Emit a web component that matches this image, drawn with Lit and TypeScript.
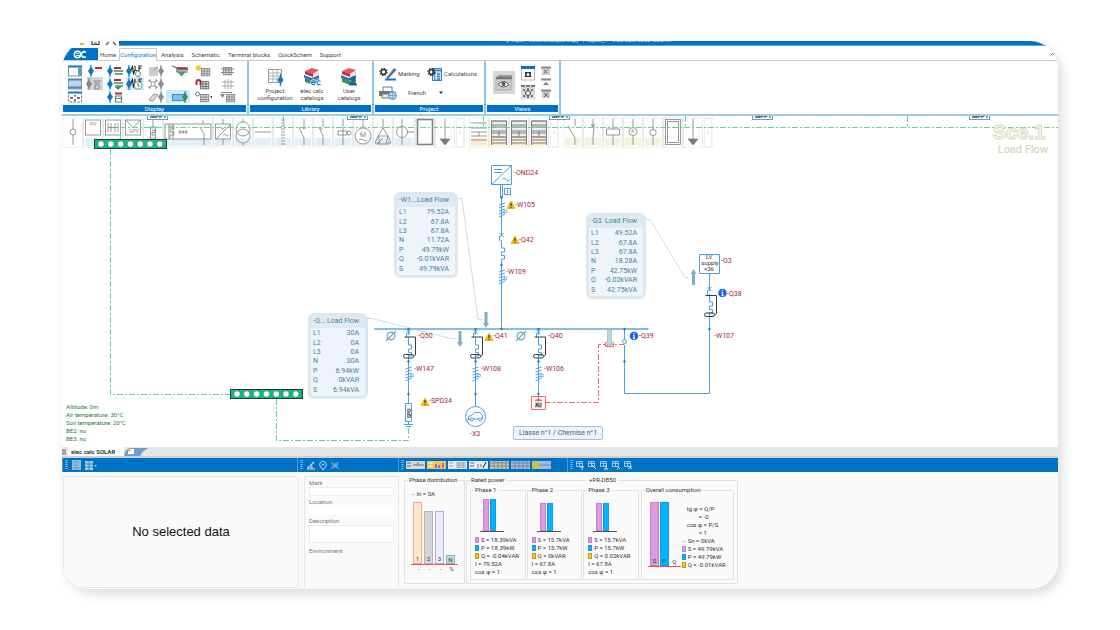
import { LitElement, html, svg, css } from "lit";
import { customElement, property } from "lit/decorators.js";

const BLUE = "#0f78c8";

const icon = (w: number, h: number, body: unknown) =>
  html`<svg width=${w} height=${h} viewBox="0 0 ${w} ${h}" fill="none" aria-hidden="true">${body}</svg>`;

/* ---------- ribbon glyphs ---------- */
const plug = (x: number, y: number, c = BLUE) =>
  svg`<path d="M${x} ${y - 6}V${y + 6}" stroke=${c} stroke-width="1.2"/><path d="M${x - 3} ${y}L${x} ${y - 4.5}L${x + 3} ${y}L${x} ${y + 4.5}Z" fill=${c}/>`;
const lines = (x: number, y: number, c1 = "#a8283c", c2 = "#3c8a55") =>
  svg`<path d="M${x} ${y - 3}h7" stroke=${c1} stroke-width="2"/><path d="M${x} ${y}h9M${x + 1} ${y + 3}h8" stroke=${c2} stroke-width="1.6"/>`;
const gridGlyph = (x: number, y: number, c = "#8e8e8e") =>
  svg`<rect x=${x} y=${y} width="9" height="8" fill="#ddd"/><path d="M${x} ${y + 0.5}h9M${x} ${y + 3}h9M${x} ${y + 5.5}h9M${x} ${y + 7.8}h9M${x + 0.5} ${y}v8M${x + 3} ${y}v8M${x + 6} ${y}v8M${x + 8.7} ${y}v8" stroke=${c} stroke-width="1"/>`;
const drop = (x: number, y: number) => svg`<path d="M${x} ${y}h4l-2 2.5z" fill="#333"/>`;
const wave = (x: number, c: string) =>
  svg`<path d="M${x} 5l1.5-3.5 1 8 1-4M${x + 4} 1v4.500h2.500M${x + 8} 6V1h3M${x + 8} 3.3h2.500" stroke=${c} stroke-width="1.1"/>`;

const displayIcons: { label: string; on?: string; body: unknown }[] = [
  { label: "Right panel", body: svg`<rect x="3.5" y="1.500" width="13" height="9.500" fill="#fff" stroke="#888"/><path d="M3 1.500h14" stroke=${BLUE} stroke-width="2"/><path d="M14.500 3v7.500" stroke="#5d9fb0" stroke-width="3"/>` },
  { label: "Marks", body: svg`${plug(6, 6)}<path d="M10 3h7" stroke="#c0283c" stroke-width="2"/>` },
  { label: "Marks and text", body: svg`${plug(5, 6)}${lines(9, 6)}` },
  { label: "Load flow values", body: svg`${plug(4, 6)}${wave(6, "#222")}<circle cx="13" cy="9" r="2.6" fill="#fff" stroke="#6a9a7c"/>` },
  { label: "Documents", body: svg`<rect x="4" y="2" width="9" height="9" fill="#ccc"/><path d="M9 5l4-3" stroke="#888"/>${plug(16, 6, "#8e8e8e")}` },
  { label: "Feeder", body: svg`<path d="M4 1l5 2v4h12V4h3" stroke="#666" stroke-width="1.2"/><path d="M9 2.500h13v3H9z" fill="#7c7474"/><path d="M9 3h10" stroke="#b2283c" stroke-width="1.500"/><path d="M9 6.500h9l-4.500 5z" fill="#4b9a68"/>` },
  { label: "New table", body: svg`${gridGlyph(9, 3)}<circle cx="6.500" cy="3" r="2.800" fill="#f3c92f"/>` },
  { label: "Grid", body: svg`${gridGlyph(7, 2)}<path d="M5 4h13M5 7.500h13" stroke="#888"/>${drop(20, 5)}` },
  { label: "Split panel", body: svg`<rect x="3.500" y="1.500" width="13" height="9.500" fill="#b9d6ea" stroke="#7a9cb5"/><path d="M3 1.500h14M3 9.500h14" stroke="#4b86b0" stroke-width="2"/>` },
  { label: "Hidden marks", on: "grey", body: svg`${plug(4, 6, "#888")}<path d="M8 3h8M9 5h6M10 7v4h4V7z" stroke="#888" stroke-width="1.200"/>` },
  { label: "Marks and supply", body: svg`${plug(5, 6)}${lines(9, 5)}<path d="M10 9h6l-3 3z" fill="#3c8a55"/>` },
  { label: "Load flow clock", on: "blue", body: svg`${plug(4, 6)}${wave(6, "#222")}<circle cx="13" cy="7.500" r="3.800" fill="#fff" stroke="#6a9a7c"/><path d="M13 5v3h2" stroke="#444" stroke-width=".8"/>` },
  { label: "Collapse", body: svg`<path d="M4 2l8 8M12 2L4 10M4 4V2h2M10 2h2v2M12 8v2h-2M6 10H4V8" stroke="#8e8e8e"/><rect x="6" y="4" width="4" height="4" fill="#fff" stroke="#999"/>${plug(16, 6, "#8e8e8e")}` },
  { label: "", body: "" },
  { label: "Snap", body: svg`${gridGlyph(8, 3, "#777")}<path d="M4.500 7V4a2 2 0 0 1 4 0v3" stroke="#b2283c" stroke-width="2"/>` },
  { label: "Axes", body: svg`<path d="M6 4h12M6 8h12M9 2v9M12 1v10M15 2v9" stroke="#aaa"/>` },
  { label: "Full screen", body: svg`<rect x="3.500" y="1.500" width="13" height="9.500" fill="#fff" stroke="#888" stroke-dasharray="3 1"/><path d="M3 1.500h14" stroke=${BLUE} stroke-width="2"/><path d="M5 7h3M12 7h3M10 4v1.500M10 8v2" stroke="#444" stroke-width="1.500"/>` },
  { label: "", body: "" },
  { label: "Table marks", body: svg`${plug(5, 6)}<path d="M10 2.500h7" stroke="#b2283c" stroke-width="2"/><path d="M10.500 5h6v6h-6zM11 7.500h5" stroke="#5b8a6c" stroke-width="1.200"/>` },
  { label: "", body: "" },
  { label: "Cable", body: svg`<path d="M4 9l5-6 4 1-5 6z" stroke="#8e8e8e" fill="#ddd"/>${plug(16, 6, "#8e8e8e")}` },
  { label: "Supply", on: "blue", body: svg`<rect x="4.500" y="3.500" width="12" height="6" fill="#7fc0f4" stroke="#3a92db"/>${plug(17, 6, "#3c8a55")}` },
  { label: "Table options", body: svg`${gridGlyph(8, 3)}<circle cx="5.500" cy="3" r="2" stroke="#777"/>${drop(18, 5)}` },
  { label: "Import table", body: svg`${gridGlyph(10, 3)}<path d="M5 1.500h11" stroke="#888"/><path d="M4 3h5l-2.500 4z" fill="#888"/>` },
];

const books = (extra: unknown) =>
  svg`<path d="M2 10l8 3 6-3v4l-6 3-8-3z" fill="#3c8f63"/><path d="M1 7l8 3 7-3v3l-7 3-8-3z" fill="#3478b8"/><path d="M2 3l7-3 7 2-6 4z" fill="#e05a62"/><path d="M2 3l8 3v3L2 6z" fill="#b82f3e"/><path d="M10 6l6-3v3l-6 3z" fill="#f3dcdc"/>${extra}`;

const libraryItems = [
  { l: ["Project", "configuration"], i: svg`<path d="M2.500 1.500h13v13h-13z" fill="#fff" stroke="#8c9a94"/><path d="M2.500 5h13M2.500 8h13M2.500 11h13M7 1.500v13M11 1.500v13" stroke="#a4b5ac"/>${plug(14.5, 12)}` },
  { l: ["elec calc", "catalogs"], i: books(svg`<path d="M8.500 14.500h4a2 2 0 1 0-.6 1.600M17.500 13.500a2 2 0 1 0 0 2.600" stroke="#fff" stroke-width="2.600"/><path d="M8.500 14.500h4a2 2 0 1 0-.6 1.600M17.500 13.500a2 2 0 1 0 0 2.600" stroke=${BLUE} stroke-width="1.100"/>`) },
  { l: ["User", "catalogs"], i: books(svg`<circle cx="13" cy="11" r="2.400" fill="#1f5f9a"/><path d="M9 17.500c0-5 8-5 8 0z" fill="#1f5f9a"/>`) },
];

const gear = (x: number, y: number) =>
  svg`<circle cx=${x} cy=${y} r="2.400" stroke="#333" stroke-width="1.500"/><circle cx=${x} cy=${y} r="3.600" stroke="#333" stroke-width="1.200" stroke-dasharray="1.500 1.300"/>`;

/* ---------- symbol palette ---------- */
type Sym = { n: string; w?: number; tint?: string; body: unknown };
const sky = "#dff0fb";
const symbols: Sym[] = [
  { n: "Node", body: svg`<path d="M9 1v10M9 17v10"/><circle cx="9" cy="14" r="3"/>` },
  { n: "PV module", tint: sky, body: svg`<rect x="1.500" y="2" width="15" height="15" fill="#fff"/><text class="t" x="6" y="8">PV</text>` },
  { n: "Junction", tint: sky, body: svg`<rect x="1.500" y="2" width="15" height="15" fill="#fff"/><path d="M4 5v9M7 5v9M11 5v9M14 5v9M4 9.500h10"/>` },
  { n: "GPV", tint: sky, body: svg`<rect x="1.500" y="2" width="15" height="15" fill="#fff"/><path d="M2 2l7 8 7-8"/><text class="t" x="5" y="15">GPV</text>` },
  { n: "Fuse", tint: sky, body: svg`<path d="M9 1v26"/><rect x="6.500" y="9" width="5" height="12" fill="#eee"/><path d="M8 12h2.500v2.500H8V17h2.500"/>` },
  { n: "Switchboard", w: 48, tint: sky, body: svg`<rect x="1" y="6" width="46" height="15" fill="#fff"/><path d="M5 6v15M9 6v15M5 8h5v3H6v3h4v3H6v3M14 14h10M16 12v4M19 12v4M22 12v4M39 2v4M36 9l4 7v11"/>` },
  { n: "Converter", tint: sky, body: svg`<rect x="1.500" y="6" width="15" height="15" fill="#fff"/><path d="M9 1v5M2 21l15-15M4 10q2-2 3 0t3 0M9 17q2-2 3 0t3 0M9 21v6"/>` },
  { n: "Transformer", tint: sky, body: svg`<path d="M9 1v3M9 25v3"/><circle cx="9" cy="11" r="7"/><circle cx="9" cy="18" r="7"/>` },
  { n: "Busbar", tint: sky, body: svg`<path d="M1 14h16"/>` },
  { n: "Cable", tint: sky, body: svg`<path d="M8 1v26M10 1v26" stroke-dasharray="2 1"/>` },
  { n: "Switch", tint: sky, body: svg`<path d="M10 1v10M10 20v7M10 20L5 9M8 10h4"/>` },
  { n: "Contactor", tint: sky, body: svg`<path d="M9 1v8M9 18v9M9 18L5 9l4 3"/>` },
  { n: "Relay", tint: sky, body: svg`<path d="M9 1v26M4 13h9v4H4z"/><circle cx="15" cy="15" r="2"/>` },
  { n: "Motor", tint: sky, body: svg`<path d="M9 1v8"/><circle cx="9" cy="18" r="8" fill="#fff"/><text class="m" x="6" y="19">M</text><path d="M5 22q2-2 4 0t4 0"/>` },
  { n: "Load", tint: sky, body: svg`<path d="M9 1v9M9 10l-5 8h10zM9 20l-5 5M3 26h12M4 18l-3 7h5zM14 18l3 7h-5z"/>` },
  { n: "Meter", w: 20, tint: sky, body: svg`<path d="M8 1v26M13 14h7"/><circle cx="8" cy="14" r="5.500"/>` },
  { n: "Enclosure", body: svg`<rect x="1.500" y="1.500" width="15" height="25" stroke-width="1.600"/>` },
  { n: "Outgoing", body: svg`<path d="M9 1v22"/><path d="M4 21h10l-5 6z" fill="#777"/>` },
];
const cabinet = svg`<rect x="1.500" y="3" width="15" height="16" fill="#eee"/><path d="M1.500 3h15M1.500 7h15M1.500 9h15M1.500 13h15M1.500 15h15M1.500 19h15M1.500 22h15M1.500 25h15M9 13v6M1.500 3v24M16.500 3v24" stroke-width="1"/>`;
const amber = "#fdeccb";
const boards: Sym[] = [
  { n: "Board A", tint: amber, body: svg`<path d="M1 5h16M1 10h16M1 14h16M1 18h16M1 22h16M9 14v4"/>` },
  { n: "Board B", tint: amber, body: cabinet },
  { n: "Board C", tint: amber, body: cabinet },
  { n: "Board D", tint: amber, body: cabinet },
];
const lime = "#eff6dc";
const controls: Sym[] = [
  { n: "Contact", tint: lime, body: svg`<path d="M11 1v7M4 8l7 12v7"/>` },
  { n: "Auxiliary", tint: lime, body: svg`<path d="M9 1v7M7 7h4l-2 2zM10 9L9 20v7"/>` },
  { n: "Coil", tint: lime, body: svg`<path d="M9 1v10M9 17v10M2.500 11h13v6h-13z"/>` },
  { n: "Ammeter", tint: lime, body: svg`<path d="M9 1v8M9 18v9"/><circle cx="9" cy="13.500" r="4"/><text class="t" x="7" y="15">A</text>` },
  { n: "Lamp", tint: lime, body: svg`<path d="M9 1v10M9 18v9"/><circle cx="9" cy="14.500" r="3.200"/>` },
  { n: "Enclosure", body: svg`<rect x="1.500" y="1.500" width="15" height="25"/><rect x="3.500" y="3.500" width="11" height="21"/>` },
  { n: "Outgoing", body: svg`<path d="M9 1v22"/><path d="M4 21h10l-5 6z" fill="#777"/>` },
];

/* ---------- single-line diagram parts ---------- */
const dot = (x: number, y: number) => svg`<circle cx=${x} cy=${y} r="1.200" fill="#1f7ac4" stroke="none"/>`;
const coil = (x: number, y: number) =>
  svg`<path d="M${x - 3} ${y + 2}l6-2M${x - 3} ${y + 5}l6-2M${x - 3} ${y + 8}l6-2M${x - 3} ${y + 11}l6-2M${x - 3} ${y + 14}l6-3" /><circle cx=${x + 3.5} cy=${y + 8.5} r="1.500" stroke-width=".9"/>`;
const breaker = (x: number, y: number) =>
  svg`<path d="M${x - 2} ${y + 1}l4 4M${x + 2} ${y + 1}l-4 4M${x - 2} ${y + 4}v5M${x} ${y + 8}v8M${x} ${y + 16}h3v4h-3v3.500h3v3.500h-3"/>`;
const residual = (x: number, y: number) =>
  svg`<g stroke="#3a3a3a"><path d="M${x - 4} ${y}h11v18l-2 1.500"/><rect x=${x - 5} y=${y + 17.5} width="10" height="3.500" rx="1.700"/></g>`;
const terminal = (x: number, y: number) =>
  svg`<rect x=${x + 0.5} y=${y + 0.5} width="72" height="9" fill="#07c07c" stroke="#2c3b34"/>${Array.from({ length: 7 }, (_, i) => svg`<circle cx=${x + 7 + i * 9.8} cy=${y + 5} r="3.200" fill="#fff" stroke="#365" stroke-width=".6"/>`)}`;
const warn = (x: number, y: number) =>
  svg`<path d="M${x} ${y - 4}l4 7.500h-8z" fill="#f9b517" stroke="#f9b517" stroke-linejoin="round"/><path d="M${x} ${y - 2}v3M${x} ${y + 2}v1" stroke="#333" stroke-width="1.200"/>`;
const info = (x: number, y: number) =>
  svg`<circle cx=${x} cy=${y} r="4.300" fill="#1765f0"/><path d="M${x} ${y - 3}v1.300M${x} ${y - 0.8}v3.500M${x - 1} ${y + 2.7}h2M${x - 1} ${y - 0.5}h1" stroke="#fff" stroke-width="1.200"/>`;
const arrow = (x: number, y: number, up = false) =>
  up
    ? svg`<path d="M${x} ${y}l3 5h-1.500v11h-3V${y + 5}h-1.500z" fill="#7eaec4"/>`
    : svg`<path d="M${x} ${y + 16}l3-5h-1.500V${y}h-3v11h-1.500z" fill="#7eaec4"/>`;
const phi = (x: number, y: number) =>
  svg`<circle cx=${x} cy=${y} r="3.800" stroke="#7eaec4" stroke-width="1.500"/><path d="M${x - 5} ${y + 5}l10-10" stroke="#7eaec4" stroke-width="1.400"/>`;

const labels: [string, number, number][] = [
  ["-OND24", 514, 175], ["-W105", 515, 207], ["-Q42", 519, 242], ["-W109", 506, 274],
  ["-G3", 721, 263], ["-Q38", 727, 296], ["-W107", 714, 338], ["-Q39", 639, 338],
  ["-Q50", 418, 338], ["-Q41", 493, 338], ["-Q40", 548, 338], ["-W147", 414, 371],
  ["-W108", 481, 371], ["-W106", 544, 371], ["-SPD34", 429, 403], ["-X3", 470, 436],
];

type Flow = { mark: string; x: number; y: number; w: number; v: string[] };
const flows: Flow[] = [
  { mark: "-W1...", x: 332, y: 76, w: 64, v: ["79.52A", "67.8A", "67.8A", "11.72A", "49.79kW", "-0.01kVAR", "49.79kVA"] },
  { mark: "-G3", x: 524, y: 97, w: 60, v: ["49.52A", "67.8A", "67.8A", "18.28A", "42.75kW", "-0.02kVAR", "42.75kVA"] },
  { mark: "-Q...", x: 246, y: 197, w: 60, v: ["30A", "0A", "0A", "30A", "6.94kW", "0kVAR", "6.94kVA"] },
];
const flowKeys = ["L1", "L2", "L3", "N", "P", "Q", "S"];

const shared = css`
  :host { display: block; }
  * { box-sizing: border-box; }
  svg { display: block; flex: none; }
  button { font: inherit; color: inherit; background: none; border: 0; padding: 0; margin: 0; white-space: nowrap; }
`;

@customElement("ribbon-bar")
class RibbonBar extends LitElement {
  static styles = [shared, css`
    :host { color: #444; font-size: 6px; line-height: 8px; }
    .title { height: 5px; display: flex; overflow: hidden; background: #fff; }
    .quick { width: 57px; padding-left: 16px; display: flex; gap: 4px; }
    .caption { flex: 1; background: #0072c6; color: #d9ebf8; text-align: center; line-height: 8px; border-bottom: 1px solid #5aa5dc; }
    .caption span { display: block; margin-top: -5px; }
    .tabs { display: flex; height: 15px; padding: 2px 3px 0 0; border-bottom: 1px solid #cacaca; }
    .app { width: 36px; background: #0072c6; color: #fff; display: flex; align-items: center; justify-content: center; }
    .tab { padding: 0 3px; margin-bottom: -1px; border: 1px solid transparent; border-bottom: 0; }
    .tab.home { padding: 0 2px 0 1px; }
    .tab.active { color: #0f78c8; border-color: #cacaca; background: #fff; padding: 0; }
    .fold { margin-left: auto; color: #0f78c8; align-self: flex-start; padding-top: 4px; }
    .groups { display: flex; height: 55px; border-bottom: 2px solid #9ccbee; }
    .group { display: flex; flex-direction: column; border-right: 2px solid #8dc2ea; padding-bottom: 2px; }
    .body { flex: 1; display: flex; }
    .name { background: #0072c6; color: #fff; text-align: center; height: 7px; line-height: 7px; margin: 0 1px; }
    .display { width: 187px; }
    .display .body { display: grid; grid-template-columns: repeat(5, 20px) 26px 22px 26px; grid-auto-rows: 13px; padding: 3px 0 0 3px; }
    .cell { display: flex; align-items: center; justify-content: center; }
    .cell.grey { background: #d4d4d4; margin: 0 2px; }
    .cell.blue { background: #d2e8f8; margin: 0 1px; }
    .library { width: 125px; }
    .library .body { gap: 1px; padding: 7px 0 0 8px; }
    .big { width: 36px; display: flex; flex-direction: column; align-items: center; line-height: 7px; }
    .big svg { margin-bottom: 1px; }
    .project { width: 112px; }
    .project .body { display: grid; grid-template-columns: 48px 1fr; grid-template-rows: 18px 18px; padding: 4px 0 0 5px; align-items: center; }
    .item { display: flex; align-items: center; gap: 1px; text-align: left; }
    .lang { display: flex; grid-column: 1 / 3; align-items: center; padding-top: 2px; }
    .lang select { appearance: none; border: 0; background: none; font: inherit; color: inherit; padding: 0; width: 30px; margin-left: 11px; }
    .views { width: 75px; }
    .views .body { padding: 5px 0 0 7px; gap: 6px; }
    .eye { background: #d6d6d6; width: 22px; height: 23px; margin-top: 5px; display: flex; align-items: center; justify-content: center; }
    .stack { display: flex; flex-direction: column; gap: 3px; }
  `];
  render() {
    return html`
      <div class="title">
        <div class="quick">
          ${icon(9, 5, svg`<path d="M2 3h4" stroke="#e8b53a" stroke-width="2"/>`)}
          ${icon(10, 5, svg`<path d="M1 0v3.500h7V0M3 2h3" stroke="#444" stroke-width="1.200"/>`)}
          ${icon(12, 5, svg`<path d="M1 4l3-3M8 1l3 3" stroke="#555" stroke-width="1.200"/>`)}
        </div>
        <div class="caption"><span>[Projet Photovoltaïque.ecp] - Project_1 - elec calc 2023 SOLAR</span></div>
      </div>
      <nav class="tabs">
        <button class="app" aria-label="elec calc">${icon(14, 9, svg`<circle cx="4.500" cy="4.500" r="3.900" fill="#fff"/><path d="M3 4.500h3.500a2 2 0 1 0-.8 1.600" stroke="#0072c6"/><path d="M13 2.500a2.700 2.700 0 1 0 0 4" stroke="#fff" stroke-width="1.500"/>`)}</button>
        <button class="tab home">Home</button><button class="tab active">Configuration</button>
        ${["Analysis", "Schematic", "Terminal blocks", "QuickSchem", "Support"].map((t) => html`<button class="tab">${t}</button>`)}
        <button class="fold" aria-label="Collapse ribbon">${icon(5, 4, svg`<path d="M.5 3.500l2-2 2 2" stroke=${BLUE}/>`)}</button>
      </nav>
      <div class="groups">
        <section class="group display">
          <div class="body">${displayIcons.map((d) => d.label
            ? html`<button class="cell ${d.on ?? ""}" aria-label=${d.label}>${icon(20, 12, d.body)}</button>`
            : html`<span></span>`)}</div>
          <div class="name">Display</div>
        </section>
        <section class="group library">
          <div class="body">${libraryItems.map((b) => html`<button class="big">${icon(18, 18, b.i)}<span>${b.l[0]}</span><span>${b.l[1]}</span></button>`)}</div>
          <div class="name">Library</div>
        </section>
        <section class="group project">
          <div class="body">
            <button class="item">${icon(18, 14, svg`${gear(4.5, 5)}<path d="M7 11l8-10 2.500 2L9 12z" fill="#5d6f9c"/><path d="M6 12.500h11" stroke=${BLUE} stroke-width="2"/>`)}<span>Marking</span></button>
            <button class="item">${icon(16, 14, svg`<path d="M5.500 1.500h9v12h-9z" fill="#cfe4f6" stroke="#2f7fc0"/><path d="M6 3.500h8M7 7h1.500M10 7h3M7 9.500h1.500M10 9.500h3M7 12h1.500M10 12h3" stroke="#2f7fc0" stroke-width="1.500"/>${gear(4.5, 5)}`)}<span>Calculations</span></button>
            <div class="lang">
              ${icon(18, 14, svg`<path d="M4 5V1h9v4" fill="#fff" stroke="#777"/><path d="M0 5h15v5H0z" fill="#6c7480"/><path d="M3 8h8v4H3z" fill="#e8e8e8" stroke="#777"/><circle cx="13.500" cy="9.500" r="4" fill="#e5f1fb" stroke="#4a90cc"/><path d="M9.500 9.500h8M13.500 5.500v8" stroke="#4a90cc" stroke-width=".7"/><ellipse cx="13.500" cy="9.500" rx="2" ry="4" stroke="#4a90cc" stroke-width=".7"/>`)}
              <select aria-label="Language"><option>French</option></select>
              ${icon(6, 4, svg`<path d="M1 .5h4l-2 2.500z" fill="#333"/>`)}
            </div>
          </div>
          <div class="name">Project</div>
        </section>
        <section class="group views">
          <div class="body">
            <button class="eye" aria-label="View">${icon(18, 17, svg`<path d="M2 3l2-2h13v3z" fill="#999"/><path d="M1 4h15v12H1z" fill="#cdcdcd" stroke="#aaa"/><path d="M1 4h16" stroke="#777" stroke-width="2.500"/><path d="M3 10.500q5.500-6 11 0q-5.500 5-11 0z" stroke="#555" fill="#eee"/><circle cx="8.500" cy="10" r="1.900" fill="#555"/>`)}</button>
            <div class="stack">
              <button aria-label="Save view">${icon(14, 15, svg`<path d="M.5 1h13v13H.5z" fill="#fff" stroke="#b5b5b5"/><path d="M0 1.500h14" stroke="#0072c6" stroke-width="3"/><path d="M4 6h6v5H4z" fill="#333"/><circle cx="7" cy="8.500" r="1.500" fill="#fff"/>`)}</button>
              <button aria-label="View settings">${icon(14, 15, svg`<path d="M0 1h14v14H0z" fill="#d8d8d8"/><path d="M0 2h14" stroke="#777" stroke-width="2" stroke-dasharray="4 1"/><circle cx="7" cy="9" r="2.500" stroke="#555"/><path d="M2 6h2M10 6h2M2 12h2M10 12h2M7 4v2M7 12v2" stroke="#555" stroke-width="1.500"/>`)}</button>
            </div>
            <div class="stack">
              <button aria-label="Close view">${icon(10, 9, svg`<path d="M1 1h8v8H1z" fill="#ccc"/><path d="M0 1.500h10" stroke="#888" stroke-width="2"/><path d="M3 4l3 3M6 4l-3 3" stroke="#666"/>`)}</button>
              <button aria-label="Reduce view">${icon(10, 8, svg`<path d="M0 1.500h10" stroke="#888" stroke-width="2"/><path d="M2 7l3-3 3 3z" fill="#777"/>`)}</button>
              <button aria-label="Delete view">${icon(10, 9, svg`<path d="M1 1h8v8H1z" fill="#ccc"/><path d="M0 1.500h10" stroke="#888" stroke-width="2"/><path d="M3 4l4 4M7 4l-4 4" stroke="#666"/>`)}</button>
            </div>
          </div>
          <div class="name">Views</div>
        </section>
      </div>`;
  }
}

@customElement("symbol-palette")
class SymbolPalette extends LitElement {
  static styles = [shared, css`
    :host { display: flex; gap: 6px; padding: 2px 0 0 2px; }
    .set { display: flex; gap: 2px; height: 29px; outline: 1px solid #f2f2f2; }
    .sym { width: 18px; background: #fdfdfd; outline: 1px solid #eaeaea; display: flex; overflow: hidden; }
    .wide { width: 48px; }
    .meter { width: 20px; }
    .more { width: 8px; color: #bbb; font-size: 8px; border: 1px solid #eee; }
    svg { stroke: #808080; stroke-width: .8; }
    text { stroke: none; fill: #888; font-family: Roboto, sans-serif; }
    .t { font-size: 5px; }
    .m { font-size: 7px; }
  `];
  private set(items: Sym[]) {
    return html`<div class="set">${items.map((s) => html`<button class="sym ${s.w === 48 ? "wide" : s.w === 20 ? "meter" : ""}" aria-label=${s.n}>
      ${icon(s.w ?? 18, 29, svg`${s.tint ? svg`<rect x="1" y="20" width=${(s.w ?? 18) - 2} height="8" fill=${s.tint} stroke="none"/>` : ""}${s.body}`)}</button>`)}
      <button class="more" aria-label="More">‹</button></div>`;
  }
  render() {
    return html`${this.set(symbols)}${this.set(boards)}${this.set(controls)}`;
  }
}

@customElement("flow-card")
class FlowCard extends LitElement {
  @property({ attribute: false }) flow!: Flow;
  static styles = [shared, css`
    .card { border: 3px solid #dbe8ef; border-radius: 6px; background: #eef4f9; color: #4b809c; font-size: 7px; line-height: 9px; }
    .head { display: flex; justify-content: space-between; background: #dfeaf1; padding: 1px 6px 2px 2px; white-space: nowrap; }
    table { width: 100%; height: 66px; border-collapse: collapse; margin: 1px 0; }
    td { padding: 0 0 0 2px; }
    td + td { text-align: right; padding: 0 6px 0 0; }
  `];
  render() {
    return html`<div class="card"><div class="head"><span>${this.flow.mark}</span><span>Load Flow</span></div>
      <table><tbody>${flowKeys.map((k, i) => html`<tr><td>${k}</td><td>${this.flow.v[i]}</td></tr>`)}</tbody></table></div>`;
  }
}

@customElement("line-diagram")
class LineDiagram extends LitElement {
  static styles = [shared, css`
    :host { position: relative; overflow: hidden; height: 331px; background: #fff; }
    .plan { position: absolute; inset: 0; width: 100%; height: 100%; pointer-events: none; }
    text { stroke: none; }
    .mark { fill: #a32638; font-size: 7px; }
    .dark { fill: #333; font-size: 6px; }
    .small { fill: #333; font-size: 5px; font-weight: 700; }
    .mppt { fill: #222; font-size: 6px; font-weight: 700; }
    flow-card { position: absolute; }
    .scene { position: absolute; right: 10px; top: 4px; text-align: right; color: #fff; font-weight: 700; }
    .scene b { display: block; font: 700 20px/24px "Liberation Sans", sans-serif; padding-right: 3px; -webkit-text-stroke: 1px #cfdaba; }
    .scene span { display: block; font-size: 11px; line-height: 12px; font-weight: 500; color: #d2dcbe; }
    .sheet { position: absolute; left: 451px; top: 310px; width: 90px; height: 14px; border: 1px solid #a9bede; border-radius: 2px; background: #ecf3fd; color: #4d5c78; font-size: 7px; }
    .site { position: absolute; left: 4px; bottom: 4px; color: #1d7a35; font-size: 6px; line-height: 8px; }
  `];
  render() {
    const S = "#4ba0df";
    return html`
      <symbol-palette></symbol-palette>
      <svg class="plan" fill="none" aria-label="Single-line diagram">
        <g transform="translate(-62 -116)">
          <g stroke="#5fd3a4" stroke-dasharray="6 2 2 2">
            <path d="M120.500 140V127.500H4000M110.500 149V394.500H230M276.500 399V440.500H408.500V428M283.500 116V127M483.500 116V127M685.500 116V127M907.500 116V127"/>
          </g>
          ${[147, 347, 549, 752, 969].map((x) => svg`<rect x=${x + 0.5} y="108.500" width="20" height="11" fill="#fff" stroke="#58a3dc"/><text class="mppt" x=${x + 3} y="118">MPPT</text>`)}
          ${terminal(94, 139)}${terminal(230, 389)}
          <g stroke="#c9dfe8">
            <path d="M458 198.500h4L478 319.500h5M645 219.500h5L685 277.500h4M367 318.500h5L451 338.500h6"/>
          </g>
          <path d="M374.500 329H648.500" stroke="#86bde8" stroke-width="2"/>
          <g stroke=${S}>
            <path d="M491.500 165.500h20v19h-20zM491.500 184.500l20-19M494 169.500h8M494 172.500h8M502 179.500q2-3 4 0t4 0"/>
            <path d="M500.500 185v13M502.500 185v13M504.500 188.500h6v6h-6zM507.500 190v3"/>
            <path d="M501.500 198V236M501.500 259V329"/>
            ${coil(502, 203)}${coil(502, 270)}${breaker(501.5, 232)}${dot(501.5, 197.5)}${dot(501.5, 265)}${dot(501.5, 329)}
            ${[408.5, 475.5, 538.5].map((x, i) => svg`<path d="M${x} 329v6M${x} 355V${[403, 406, 396][i]}"/>${breaker(x, 329)}${residual(x, 337)}${dot(x, 329)}${dot(x, 361.5)}${dot(x, 394)}${coil(x, 367)}`)}
            <path d="M405.500 403.500h6v18h-6zM408.500 422v3M404 424.500h9M406 426.500h5"/>
            <circle cx="475.500" cy="416.500" r="10" fill="#fff"/>
            <path d="M468.500 419v-2.500l3-1 3-3h5l3 3v3.500zM466 421q3-3 6-1"/><circle cx="472" cy="419.500" r="1.500" fill="#fff"/><circle cx="480" cy="419.500" r="1.500" fill="#fff"/>
            <path d="M699.500 254.500h20v19h-20zM709.500 274v17M709.500 312V393.500H624.500V345M624.500 329V339"/>
            ${breaker(709.5, 286)}${residual(709.5, 295.5)}${dot(709.5, 329)}${dot(624.5, 329)}${dot(624.5, 361.5)}
            <circle cx="624.500" cy="341.500" r="2"/>
          </g>
          <g stroke="#f06a6a">
            <path d="M545 402.500H598.500V344.500H624" stroke-dasharray="6 2 2 2"/>
            <path d="M531.500 396.500h14v13h-14zM535 400.500q3.500-3 7 0zM538.500 397v5M605.500 342.500h8v4h-8zM606 346l6-3"/>
          </g>
          <rect x="535" y="402" width="7" height="6" fill="#e2d0d0"/><text class="small" x="535" y="407">AU</text>
          <path d="M607.500 330h4v12h1.500l-3.500 4-3.500-4h1.500z" fill="#bcd6e3" stroke="#8fb6c8" stroke-width=".6"/>
          ${arrow(486, 312)}${arrow(460, 331)}${arrow(693.5, 269, true)}${phi(391, 336)}${phi(521, 336)}
          ${warn(511, 205)}${warn(515, 240)}${warn(489, 337)}${warn(425, 402)}${info(722.5, 293)}${info(634, 336)}
          ${labels.map(([t, x, y]) => svg`<text class="mark" x=${x} y=${y}>${t}</text>`)}
          <g text-anchor="middle"><text class="dark" x="709" y="259">LV</text><text class="dark" x="710" y="265">supply</text><text class="dark" x="709" y="271">×36</text></g>
          <text class="small" transform="translate(411 418) rotate(-90)">SPD</text>
        </g>
      </svg>
      ${flows.map((f) => html`<flow-card .flow=${f} style="left:${f.x}px;top:${f.y}px;width:${f.w}px"></flow-card>`)}
      <div class="scene"><b>Sce.1</b><span>Load Flow</span></div>
      <button class="sheet">Liasse n°1 / Chemise n°1</button>
      <div class="site">Altitude: 0m<br>Air temperature: 30°C<br>Soil temperature: 20°C<br>BE2: no<br>BE3: no</div>`;
  }
}

type Phase = { name: string; h: number; s: string; p: string; q: string; i: string };
const phases: Phase[] = [
  { name: "Phase 1", h: 32, s: "18.39kVA", p: "18.39kW", q: "-0.04kVAR", i: "79.52A" },
  { name: "Phase 2", h: 28, s: "15.7kVA", p: "15.7kW", q: "0kVAR", i: "67.8A" },
  { name: "Phase 3", h: 28, s: "15.7kVA", p: "15.7kW", q: "0.02kVAR", i: "67.8A" },
];
const spread = [
  { n: "1", h: 62, c: "orange" }, { n: "2", h: 53, c: "grey" }, { n: "3", h: 53, c: "lilac" }, { n: "N", h: 9, c: "teal" },
];

@customElement("data-dock")
class DataDock extends LitElement {
  static styles = [shared, css`
    :host { background: #fafafa; color: #333; font-size: 6px; line-height: 8px; }
    .files { height: 11px; background: #e6e6e6; border-bottom: 2px solid #d0d0d0; display: flex; }
    .grip { width: 6px; padding-top: 2px; }
    .file { background: #fff; padding: 0 9px 0 3px; font-weight: 700; text-align: left; }
    .bars { display: flex; height: 14px; background: #0072c6; }
    .bar { display: flex; align-items: center; border-left: 1px solid #4a9bd6; padding-left: 2px; }
    .b1 { width: 235px; gap: 4px; }
    .b2 { width: 101px; gap: 4px; }
    .b3 { width: 169px; gap: 2px; }
    .b4 { gap: 2px; }
    .panels { display: flex; padding: 4px 0 0 1px; gap: 5px; height: 117px; align-items: stretch; }
    .empty { width: 236px; border: 1px solid #e6e6e6; display: flex; align-items: center; justify-content: center; font: 13px/16px "Liberation Sans", sans-serif; color: #111; border-radius: 2px; margin-bottom: 1px; }
    .form { width: 95px; border: 1px solid #e6e6e6; border-bottom: 0; border-radius: 2px; padding: 2px 4px 0; display: flex; flex-direction: column; color: #777; }
    .form input, .form textarea { flex: none; border: 1px solid #ededed; background: #fff; height: 9px; width: 100%; margin: 0 0 2px; padding: 0; display: block; resize: none; }
    .form .plain { border-color: #fcfcfc; }
    .form .bare { border-color: transparent; background: none; }
    .form textarea { height: 18px; margin-bottom: 4px; }
    fieldset { border: 1px solid #e2e2e2; margin: 0; padding: 0; min-width: 0; position: relative; }
    legend { padding: 0 1px; margin-left: 3px; line-height: 8px; white-space: nowrap; }
    .dist { width: 61px; height: 108px; }
    .in { padding: 6px 0 0 6px; }
    .in i, .minus { color: #f05050; font-style: normal; }
    .chart { display: flex; align-items: flex-end; gap: 2px; height: 67px; margin: 0 6px; padding-left: 2px; border-bottom: 1px solid #f05050; }
    .chart div { width: 9px; border: 1px solid; display: flex; align-items: flex-end; justify-content: center; }
    .chart .orange { background: #ffe8d2; border-color: #f7a67c; }
    .chart .grey { background: #d4d4d4; border-color: #b4b4b4; }
    .chart .lilac { background: #ecebfa; border-color: #b3a8e6; }
    .chart .teal { background: #b5dfe4; border-color: #7cbac3; line-height: 7px; }
    .pct { display: flex; margin-left: 8px; }
    .pct span { width: 11px; text-align: center; }
    .rated { width: 272px; height: 108px; margin-left: -4px; }
    .board { position: absolute; left: 120px; top: -8px; background: #fafafa; padding: 0 2px; }
    .inner { display: flex; gap: 1px; padding: 2px 3px 0; }
    .phase { width: 56px; height: 94px; }
    .overall { width: 94px; height: 94px; margin-left: 1px; }
    .duo { display: flex; align-items: flex-end; gap: 1px; height: 38px; width: 24px; margin-left: 9px; padding-left: 3px; border-bottom: 1px solid #555; margin-bottom: 4px; }
    .duo div { width: 6px; }
    .s { background: #dc9be0; border: 1px solid #c67fd4; }
    .p { background: #00b4ff; border: 1px solid #1a94ea; }
    .q { background: #ffc90e; border: 1px solid #c99a1a; }
    .row { display: flex; align-items: center; gap: 2px; padding-left: 4px; height: 8px; white-space: nowrap; }
    .row i { width: 4px; height: 6px; flex: none; }
    .all { display: flex; }
    .total { display: flex; align-items: flex-end; gap: 1px; height: 73px; width: 33px; margin: 0 0 0 6px; padding-left: 2px; border-bottom: 1px solid #f05050; }
    .total div { width: 9px; display: flex; align-items: flex-end; justify-content: center; }
    .notes { padding-top: 11px; margin-left: -2px; }
    .notes .row { padding-left: 3px; }
    .notes .g { padding-left: 8px; }
    .notes .h { padding-left: 20px; }
  `];
  render() {
    const handle = icon(3, 12, svg`<path d="M1.500 1v10" stroke="#9cc9ea" stroke-width="2" stroke-dasharray="1 1"/>`);
    const tile = (c: string, body: unknown) => icon(19, 8, svg`<rect width="19" height="8" fill=${c}/>${body}`);
    const W = "#cfe2f2";
    const row = (c: string, t: string) => html`<div class="row"><i class=${c}></i><span>${t}</span></div>`;
    return html`
      <div class="files">
        <span class="grip">${icon(5, 6, svg`<path d="M1 0v6M3 0v6" stroke="#666"/>`)}</span>
        <button class="file">elec calc SOLAR</button>
        ${icon(26, 9, svg`<path d="M0 9q1-7 6-8H25q-6 2-9 8z" fill="#6f9fd0"/><path d="M4 2h6v5H4z" fill="#fff"/><circle cx="5" cy="3" r="1.500" fill="#f2a93a"/>`)}
      </div>
      <div class="bars">
        <div class="bar b1">${handle}
          <button aria-label="Data">${icon(9, 10, svg`<rect width="9" height="10" fill="#8fb9d6"/><path d="M2 2h5M2 5h3M2 8h5" stroke="#5a94bf"/>`)}</button>
          <button aria-label="Columns">${icon(12, 9, svg`<path d="M0 0h8v9H0z" fill="#a8cbe4"/><path d="M4 0v9M0 3h8M0 6h8" stroke="#3f86bf"/><path d="M9 4h3l-1.500 2z" fill="#9cc9ea"/>`)}</button></div>
        <div class="bar b2">${handle}
          <button aria-label="Edit">${icon(8, 9, svg`<path d="M3 5L7 1M0 8h8M1 6h4v2H1z" stroke=${W} stroke-width="1.200"/>`)}</button>
          <button aria-label="Locate">${icon(8, 9, svg`<path d="M4 9L1 5a3.300 3.300 0 1 1 6 0z" stroke=${W}/><circle cx="4" cy="3.500" r="1" fill=${W}/>`)}</button>
          <button aria-label="Fit">${icon(8, 9, svg`<path d="M0 1l8 7M8 1L0 8M2 3h4v3H2z" stroke="#7fb4dc"/>`)}</button></div>
        <div class="bar b3">${handle}
          <button aria-label="Overview">${tile("#d5d9de", svg`<path d="M1 2h4M1 5h4M7 4h11M12 1v3" stroke="#667"/>`)}</button>
          <button aria-label="Power chart">${tile("#f6c944", svg`<path d="M1 2h5M1 5h5" stroke="#fff"/><path d="M9 7V3M12 7V4M16 7V2" stroke="#c060c8" stroke-width="2"/>`)}</button>
          <button aria-label="Table">${tile("#e6eaee", svg`<path d="M1 2h4M1 5h4M8 2h10M8 4h10M8 6h10M11 1v6M15 1v6" stroke="#8894a8" stroke-width=".8"/>`)}</button>
          <button aria-label="Curves">${tile("#e6eaee", svg`<path d="M1 2h4M1 5h4" stroke="#667"/><path d="M9 7V3M12 6V3" stroke="#b05a9a"/><path d="M14 7l3-6" stroke="#222"/>`)}</button>
          <button aria-label="Columns">${tile("#c9c2b4", svg`<path d="M0 2h19M0 5h19M4 0v8M8 0v8M12 0v8M16 0v8" stroke="#8d8b86"/>`)}</button>
          <button aria-label="Rows">${tile("#a9bccf", svg`<path d="M0 2h19M0 5h19M4 0v8M8 0v8M12 0v8M16 0v8" stroke="#6e8aa8"/>`)}</button>
          <button aria-label="Notes">${tile("#a9bccf", svg`<rect width="6" height="8" fill="#d2c03a"/><path d="M7 4h12" stroke="#6e8aa8"/>`)}</button></div>
        <div class="bar b4">${handle}
          ${["TC", "S", "E", "Q", "R"].map((t, i) => html`<button aria-label="Grid ${t}">${icon(10, 10, svg`<path d="M1.500 1.500h6v5h-6zM1 3.500h7M4.500 1v6" stroke="#9cc9ea"/><path d=${["M5 7h4M7 7v3", "M5 5l4 4", "M5 9h4M7 5v4", "M6 6l3 3M6 9h1", "M5 6l4 3M9 6l-4 3"][i]} stroke="#d4e8f6"/>`)}</button>`)}</div>
      </div>
      <div class="panels">
        <div class="empty">No selected data</div>
        <form class="form">
          <label for="mark">Mark</label><input id="mark">
          <label for="loc">Location</label><input id="loc" class="plain">
          <label for="desc">Description</label><textarea id="desc"></textarea>
          <label for="env">Environment</label><input id="env" class="bare">
        </form>
        <fieldset class="dist"><legend>Phase distribution</legend>
          <div class="in"><i>–</i> In = 0A</div>
          <div class="chart">${spread.map((b) => html`<div class=${b.c} style="height:${b.h}px">${b.n}</div>`)}</div>
          <div class="pct"><span>-</span><span>-</span><span>-</span><span>%</span></div>
        </fieldset>
        <fieldset class="rated"><legend>Rated power</legend><span class="board">+PR-DB50</span>
          <div class="inner">
            ${phases.map((p) => html`<fieldset class="phase"><legend>${p.name}</legend>
              <div class="duo"><div class="s" style="height:${p.h}px"></div><div class="p" style="height:${p.h}px"></div></div>
              ${row("s", `S = ${p.s}`)}${row("p", `P = ${p.p}`)}${row("q", `Q = ${p.q}`)}
              <div class="row">I = ${p.i}</div><div class="row">cos φ = 1</div></fieldset>`)}
            <fieldset class="overall"><legend>Overall consumption</legend>
              <div class="all">
                <div class="total"><div class="s" style="height:64px">S</div><div class="p" style="height:64px">P</div><div>Q</div></div>
                <div class="notes">
                  <div class="row g">tg φ = Q/P</div><div class="row h">= -0</div><div class="row g">cos φ = P/S</div><div class="row h">= 1</div>
                  <div class="row"><span class="minus">–</span>Sn = 0kVA</div>
                  ${row("s", "S = 49.79kVA")}${row("p", "P = 49.79kW")}${row("q", "Q = -0.01kVAR")}
                </div>
              </div>
            </fieldset>
          </div>
        </fieldset>
      </div>`;
  }
}

@customElement("app-root")
class AppRoot extends LitElement {
  static styles = [shared, css`
    :host { padding: 41px 62px 40px; background: #fff; font-family: Roboto, "Liberation Sans", sans-serif; }
    .window { border-radius: 28px; overflow: hidden; background: #fff; }
    .frame { border-radius: 28px; box-shadow: 4px 5px 12px rgba(0, 0, 0, 0.14); }
  `];
  render() {
    return html`<div class="frame"><main class="window"><ribbon-bar></ribbon-bar><line-diagram></line-diagram><data-dock></data-dock></main></div>`;
  }
}
